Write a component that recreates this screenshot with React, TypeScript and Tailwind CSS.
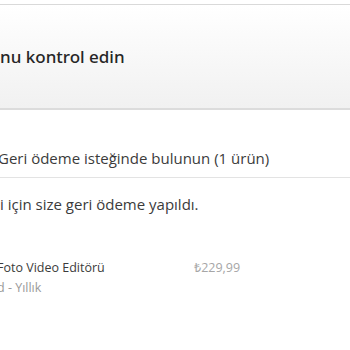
export default function App() {
  return (
    <div className="w-[350px] h-[350px] bg-white overflow-hidden" style={{ fontFamily: '"Open Sans", "Noto Sans", sans-serif' }}>
      <div className="h-[4px] bg-white" />
      <div className="h-[106px] border-t border-[#d9d9d9] border-b-2 border-b-[#dcdcdc] bg-gradient-to-b from-white to-[#f1f1f1] flex items-center">
        <h1 className="text-[17px] font-medium text-[#262626] whitespace-nowrap leading-none" style={{ fontFamily: '"Noto Sans", "Open Sans", sans-serif' }}>nu kontrol edin</h1>
      </div>
      <div className="h-[68px] border-b border-[#e3e3e3] flex items-end pb-[8px]">
        <p className="-ml-[2px] text-[15px] text-[#3b3b3b] whitespace-nowrap">Geri ödeme isteğinde bulunun (1 ürün)</p>
      </div>
      <div className="pt-[15px]">
        <p className="text-[15px] text-[#3b3b3b] whitespace-nowrap">i için size geri ödeme yapıldı.</p>
      </div>
      <div className="mt-[42px] flex items-start">
        <div className="w-[197px] -ml-[3px]">
          <p className="text-[12.5px] text-[#3b3b3b] whitespace-nowrap leading-[20px]">Foto Video Editörü</p>
          <p className="text-[12.5px] text-[#9a9a9a] whitespace-nowrap leading-[20px]">d - Yıllık</p>
        </div>
        <p className="text-[12.5px] text-[#a6a6a6] leading-[20px]">₺229,99</p>
      </div>
    </div>
  );
}
